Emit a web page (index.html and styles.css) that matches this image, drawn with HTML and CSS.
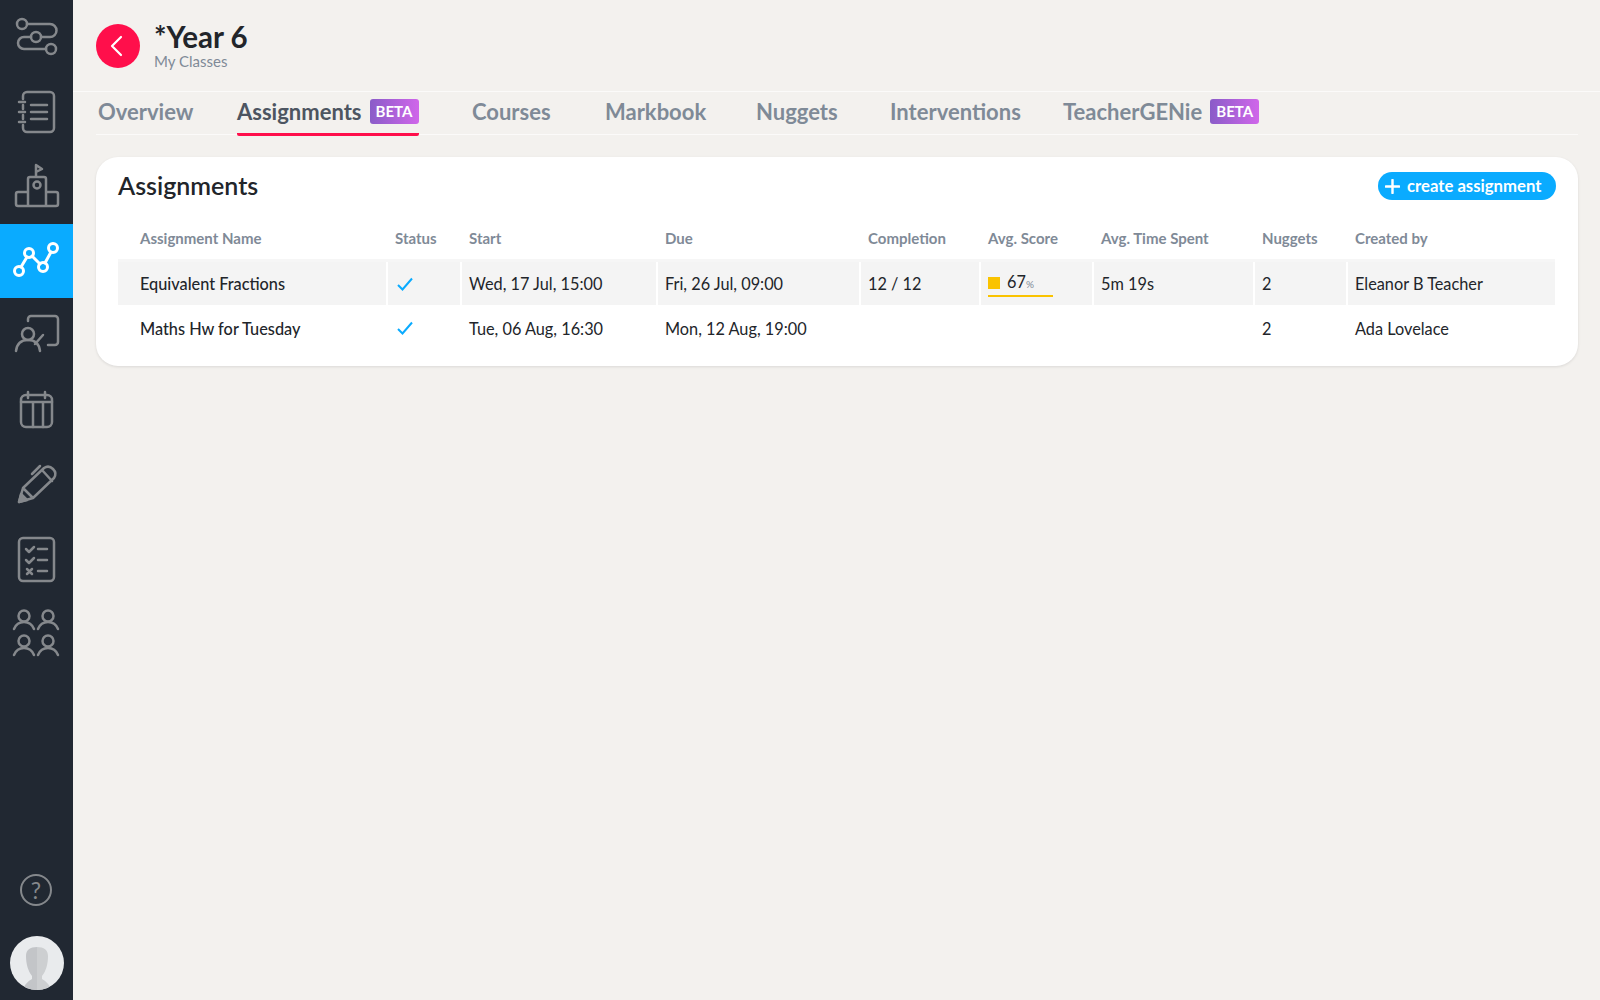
FILE: index.html
```html
<!DOCTYPE html>
<html lang="en">
<head>
    <meta charset="UTF-8">
    <title>Year 6 - Assignments</title>
    <link rel="stylesheet" href="styles.css">
</head>
<body>
    <!-- Sidebar -->
    <nav class="sidebar">
        <a class="side-item">
            <svg viewBox="0 0 73 74"><circle cx="22" cy="24" r="5"/><circle cx="36" cy="37" r="5"/><circle cx="51" cy="49" r="5"/><path d="M27 24h23a6.500 6.500 0 0 1 0 13h-9M31 37h-7a6 6 0 0 0 0 12h22"/></svg>
        </a>
        <a class="side-item">
            <svg viewBox="0 0 73 74"><path d="M23 24v-3a4 4 0 0 1 4-4h23a4 4 0 0 1 4 4v32a4 4 0 0 1-4 4H27a4 4 0 0 1-4-4v-3M23 30v4M23 40v4M19 27h6M19 37h6M19 47h6M31 30h16M31 37h16M31 44h16"/></svg>
        </a>
        <a class="side-item">
            <svg viewBox="0 0 73 74"><path d="M36 28V16l6 4-6 3M28 57V30a2 2 0 0 1 2-2h14a2 2 0 0 1 2 2v27M28 43H18a2 2 0 0 0-2 2v10a2 2 0 0 0 2 2h38a2 2 0 0 0 2-2V45a2 2 0 0 0-2-2H46"/><circle cx="37" cy="36" r="3.500"/></svg>
        </a>
        <a class="side-item active">
            <svg viewBox="0 0 73 74"><circle cx="19" cy="47" r="4.500"/><circle cx="29" cy="29" r="4.500"/><circle cx="43" cy="43" r="4.500"/><circle cx="53" cy="24" r="4.500"/><path d="M21 43l6-10M32 32l8 8M45 39l6-11"/></svg>
        </a>
        <a class="side-item">
            <svg viewBox="0 0 73 74"><circle cx="28" cy="36" r="6"/><path d="M16 53c1-8 6-11 12-11s11 3 12 11M28 23v-2a3 3 0 0 1 3-3h24a3 3 0 0 1 3 3v23a3 3 0 0 1-3 3h-7M35 46l8-9"/></svg>
        </a>
        <a class="side-item">
            <svg viewBox="0 0 73 74"><rect x="21" y="22" width="31" height="32" rx="5"/><path d="M21 29h31M28 19v6M45 19v6M33 29v25M43 29v25"/></svg>
        </a>
        <a class="side-item">
            <svg viewBox="0 0 73 74"><path d="M19 55l4-14 21-20c3-2 6-2 9 1s3 6 1 9L33 51zM23 41l10 10M42 23l10 11M32 27l8-8"/><path class="fill" d="M19 55l2-8 6 6z"/></svg>
        </a>
        <a class="side-item">
            <svg viewBox="0 0 73 74"><rect x="19" y="16" width="35" height="43" rx="4"/><path d="M26 27l3 3 5-5M26 38l3 3 5-5M27 47l5 5M32 47l-5 5M38 27h9M38 38h9M38 49h9"/></svg>
        </a>
        <a class="side-item">
            <svg viewBox="0 0 73 74"><circle cx="24" cy="20" r="5.500"/><circle cx="48" cy="20" r="5.500"/><circle cx="24" cy="45" r="5.500"/><circle cx="48" cy="45" r="5.500"/><path d="M14 33c2-5 6-7 10-7s8 2 10 7M38 33c2-5 6-7 10-7s8 2 10 7M14 59c2-5 6-7 10-7s8 2 10 7M38 59c2-5 6-7 10-7s8 2 10 7"/></svg>
        </a>
        <div class="side-bottom">
            <div class="help">?</div>
            <div class="avatar">
                <svg viewBox="0 0 54 54"><path fill="#c3c5c8" d="M27 11c-7 0-11 3-11 9 0 8 2 15 6 20v3c-3 2-7 4-9 11h14z"/><path fill="#cdcfd1" d="M27 11c7 0 11 3 11 9 0 8-2 15-6 20v3c3 2 7 4 9 11H27z"/></svg>
            </div>
        </div>
    </nav>

    <main class="content">
        <!-- Header -->
        <header class="page-head">
            <a class="back">
                <svg viewBox="0 0 44 44"><path d="M25 13l-9 9 9 9"/></svg>
            </a>
            <div>
                <h1>*Year 6</h1>
                <div class="crumb">My Classes</div>
            </div>
        </header>

        <!-- Tabs -->
        <div class="tabs">
            <a class="tab">Overview</a>
            <a class="tab selected">Assignments <span class="beta">BETA</span></a>
            <a class="tab">Courses</a>
            <a class="tab">Markbook</a>
            <a class="tab">Nuggets</a>
            <a class="tab">Interventions</a>
            <a class="tab">TeacherGENie <span class="beta">BETA</span></a>
        </div>

        <!-- Assignments card -->
        <section class="card">
            <div class="card-head">
                <h2>Assignments</h2>
                <button class="create">
                    <svg viewBox="0 0 16 16"><path d="M8 1v14M1 8h14"/></svg>
                    create assignment
                </button>
            </div>
            <table>
                <colgroup>
                    <col class="c-name"><col class="c-status"><col class="c-start"><col class="c-due"><col class="c-comp"><col class="c-score"><col class="c-time"><col class="c-nuggets"><col>
                </colgroup>
                <thead>
                    <tr>
                        <th class="first">Assignment Name</th>
                        <th>Status</th>
                        <th>Start</th>
                        <th>Due</th>
                        <th>Completion</th>
                        <th>Avg. Score</th>
                        <th>Avg. Time Spent</th>
                        <th>Nuggets</th>
                        <th>Created by</th>
                    </tr>
                </thead>
                <tbody>
                    <tr class="shaded">
                        <td class="first name">Equivalent Fractions</td>
                        <td><svg class="tick" viewBox="0 0 16 14"><path d="M1 8l4.500 4.500L15 1.500"/></svg></td>
                        <td>Wed, 17 Jul, 15:00</td>
                        <td>Fri, 26 Jul, 09:00</td>
                        <td>12 / 12</td>
                        <td>
                            <div class="score"><span class="square"></span><span class="pct">67<small>%</small></span></div>
                        </td>
                        <td>5m 19s</td>
                        <td>2</td>
                        <td>Eleanor B Teacher</td>
                    </tr>
                    <tr>
                        <td class="first name">Maths Hw for Tuesday</td>
                        <td><svg class="tick" viewBox="0 0 16 14"><path d="M1 8l4.500 4.500L15 1.500"/></svg></td>
                        <td>Tue, 06 Aug, 16:30</td>
                        <td>Mon, 12 Aug, 19:00</td>
                        <td></td>
                        <td></td>
                        <td></td>
                        <td>2</td>
                        <td>Ada Lovelace</td>
                    </tr>
                </tbody>
            </table>
        </section>
    </main>
</body>
</html>
```
FILE: styles.css
```css
/* Page */
* {
    box-sizing: border-box;
}

body {
    margin: 0;
    height: 1000px;
    overflow: hidden;
    display: flex;
    background-color: #f3f1ee;
    color: #22252a;
    font-family: Lato, "Liberation Sans", sans-serif;
}

/* Sidebar */
.sidebar {
    width: 73px;
    height: 100%;
    flex-shrink: 0;
    display: flex;
    flex-direction: column;
    background-color: #212832;
}

.side-item {
    display: block;
    height: 74.5px;
}

.side-item svg {
    display: block;
    width: 73px;
    height: 74px;
    fill: none;
    stroke: #85888c;
    stroke-width: 2.5;
    stroke-linecap: round;
    stroke-linejoin: round;
}

.side-item svg .fill {
    fill: #85888c;
}

.side-item.active {
    background-color: #0aabff;
}

.side-item.active svg {
    stroke: #fff;
    stroke-width: 3;
}

.side-bottom {
    margin-top: auto;
    padding-bottom: 10px;
    display: flex;
    flex-direction: column;
    align-items: center;
}

.help {
    width: 32px;
    height: 32px;
    margin: 0 1px 30px 0;
    border: 2px solid #85888c;
    border-radius: 50%;
    color: #85888c;
    font-size: 23px;
    line-height: 28px;
    text-align: center;
}

.avatar {
    width: 54px;
    height: 54px;
    border-radius: 50%;
    overflow: hidden;
    background-color: #e9ebed;
}

.avatar svg {
    display: block;
}

/* Header */
.content {
    flex: 1;
    min-width: 0;
}

.page-head {
    height: 92px;
    padding: 24px 0 0 23px;
    display: flex;
    border-bottom: 1px solid #fbfaf9;
}

.back {
    width: 44px;
    height: 44px;
    margin-right: 14px;
    border-radius: 50%;
    background-color: #ff0f4b;
}

.back svg {
    display: block;
    fill: none;
    stroke: #fff;
    stroke-width: 2.2;
    stroke-linecap: round;
    stroke-linejoin: round;
}

h1 {
    margin: -4px 0 0;
    font-size: 29.500px;
    line-height: 34px;
    font-weight: 700;
}

.crumb {
    margin-top: -1px;
    color: #7f8a97;
    font-size: 15px;
    line-height: 16px;
}

/* Tabs */
.tabs {
    height: 43px;
    margin: 0 22px 0 23px;
    padding-left: 2px;
    display: grid;
    grid-template-columns: 139px 235px 133px 151px 134px 173px auto;
    border-bottom: 1px solid #fbfaf9;
}

.tab {
    height: 44px;
    padding-bottom: 6px;
    justify-self: start;
    display: flex;
    align-items: center;
    gap: 8px;
    color: #7f8a97;
    font-size: 22px;
    font-weight: 700;
    white-space: nowrap;
}

.tab.selected {
    color: #4d5561;
    padding-bottom: 3px;
    border-bottom: 3px solid #ff0f4b;
    border-radius: 2px;
}

.beta {
    width: 49px;
    height: 25px;
    border-radius: 3px;
    background: linear-gradient(90deg, #8a5cc8, #d066ea);
    color: #fff;
    font-size: 15px;
    line-height: 25px;
    text-align: center;
}

/* Card */
.card {
    height: 209px;
    margin: 22px 22px 0 23px;
    padding: 15px 22px 0;
    background-color: #fff;
    border-radius: 22px;
    box-shadow: 0 1px 3px rgba(0, 0, 0, 0.1);
}

.card-head {
    height: 45px;
    display: flex;
    justify-content: space-between;
    align-items: flex-start;
}

h2 {
    margin: -1px 0 0;
    font-size: 25px;
    line-height: 29px;
    font-weight: 600;
}

.create {
    width: 178px;
    height: 28px;
    padding: 0 0 0 7px;
    border: none;
    border-radius: 14px;
    display: flex;
    align-items: center;
    gap: 7px;
    background-color: #0aabff;
    color: #fff;
    font-family: inherit;
    font-size: 16.700px;
    font-weight: 700;
    cursor: pointer;
}

.create svg {
    width: 15px;
    height: 15px;
    fill: none;
    stroke: #fff;
    stroke-width: 2.6;
    stroke-linecap: round;
}

/* Table */
table {
    width: calc(100% - 1px);
    table-layout: fixed;
    border-collapse: separate;
    border-spacing: 0;
}

.c-name { width: 270px; }
.c-status { width: 74px; }
.c-start { width: 196px; }
.c-due { width: 203px; }
.c-comp { width: 120px; }
.c-score { width: 113px; }
.c-time { width: 161px; }
.c-nuggets { width: 93px; }

th {
    height: 45px;
    padding: 0 0 0 7px;
    border-bottom: 3px solid #f6f6f6;
    color: #7f8a97;
    font-size: 15px;
    font-weight: 700;
    text-align: left;
}

td {
    height: 46px;
    padding: 0 0 0 7px;
    border-right: 2px solid #fff;
    font-size: 16.300px;
    white-space: nowrap;
}

td:last-child {
    border-right: none;
}

tr.shaded td {
    height: 43px;
    background-color: #f4f4f4;
}

th.first,
td.first {
    padding-left: 22px;
}

.name {
    font-weight: 500;
}

.tick {
    display: block;
    width: 16px;
    height: 14px;
    margin-left: 2px;
    fill: none;
    stroke: #0aabff;
    stroke-width: 2;
}

.score {
    width: 65px;
    height: 24px;
    margin-top: 2px;
    display: flex;
    align-items: flex-start;
    gap: 7px;
    border-bottom: 2px solid #fac300;
}

.square {
    width: 12px;
    height: 12px;
    margin-top: 4px;
    background-color: #fac300;
}

.pct {
    line-height: 18px;
}

.pct small {
    color: #7f8a97;
    font-size: 10px;
}
```
